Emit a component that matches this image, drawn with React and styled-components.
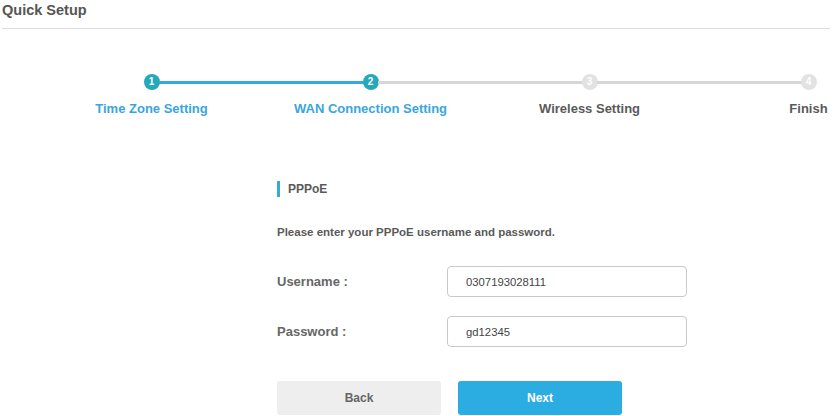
import styled, { createGlobalStyle } from 'styled-components';

const GlobalStyle = createGlobalStyle`
  html, body {
    margin: 0;
    padding: 0;
    background: #ffffff;
    overflow: hidden;
  }
  body {
    font-family: 'Liberation Sans', Arial, sans-serif;
  }
`;

const steps = [
  { label: 'Time Zone Setting', done: true },
  { label: 'WAN Connection Setting', done: true },
  { label: 'Wireless Setting', done: false },
  { label: 'Finish', done: false },
];

export default function App() {
  return (
    <Page>
      <GlobalStyle />
      <Header>
        <h1>Quick Setup</h1>
      </Header>

      <Stepper>
        {steps.map((step, i) => (
          <Step key={step.label} $last={i === steps.length - 1} $lineOn={step.done && steps[i + 1] && steps[i + 1].done}>
            <Dot $on={step.done}>{i + 1}</Dot>
            <StepLabel $on={step.done}>{step.label}</StepLabel>
          </Step>
        ))}
      </Stepper>

      <Form>
        <SectionTitle>PPPoE</SectionTitle>
        <Hint>Please enter your PPPoE username and password.</Hint>

        <Row>
          <FieldLabel>Username :</FieldLabel>
          <Input type="text" defaultValue="0307193028111" />
        </Row>
        <Row>
          <FieldLabel>Password :</FieldLabel>
          <Input type="text" defaultValue="gd12345" />
        </Row>

        <Buttons>
          <Button>Back</Button>
          <Button $primary>Next</Button>
        </Buttons>
      </Form>
    </Page>
  );
}

const Page = styled.div`
  width: 835px;
  height: 416px;
  overflow: hidden;
  color: #555555;
`;

const Header = styled.div`
  margin: 0 5px 0 2px;
  height: 28px;
  border-bottom: 1px solid #dcdcdc;

  h1 {
    margin: 0;
    padding-top: 2px;
    font-size: 14.5px;
    line-height: 17px;
    font-weight: 700;
    color: #555555;
  }
`;

const Stepper = styled.div`
  display: grid;
  grid-template-columns: repeat(4, 219px);
  margin: 44px 0 0 42px;
`;

const Step = styled.div`
  position: relative;
  display: flex;
  flex-direction: column;
  align-items: center;

  &::after {
    content: '';
    display: ${(p) => (p.$last ? 'none' : 'block')};
    position: absolute;
    top: 8px;
    left: calc(50% + 7px);
    width: 205px;
    height: 3px;
    background: ${(p) => (p.$lineOn ? '#37a7df' : '#d6d6d6')};
  }
`;

const Dot = styled.div`
  width: 16px;
  height: 16px;
  margin-top: 1px;
  border-radius: 50%;
  background: ${(p) => (p.$on ? '#25a9b9' : '#e2e2e2')};
  color: #ffffff;
  font-size: 10px;
  font-weight: 700;
  line-height: 16px;
  text-align: center;
`;

const StepLabel = styled.div`
  margin-top: 11px;
  white-space: nowrap;
  font-size: 13px;
  line-height: 15px;
  font-weight: 700;
  color: ${(p) => (p.$on ? '#3aa6dc' : '#5a5a5a')};
`;

const Form = styled.div`
  width: 410px;
  margin: 65px 0 0 277px;
  display: flex;
  flex-direction: column;
`;

const SectionTitle = styled.div`
  border-left: 3px solid #37a9de;
  padding-left: 8px;
  height: 16px;
  font-size: 12px;
  line-height: 16px;
  font-weight: 700;
  color: #5a5a5a;
`;

const Hint = styled.div`
  margin-top: 29px;
  font-size: 11.5px;
  line-height: 13px;
  font-weight: 700;
  color: #5a5a5a;
`;

const Row = styled.div`
  display: flex;
  align-items: center;
  margin-top: 27px;
  & + & {
    margin-top: 19px;
  }
`;

const FieldLabel = styled.div`
  width: 170px;
  font-size: 13px;
  font-weight: 700;
  color: #666666;
`;

const Input = styled.input`
  box-sizing: border-box;
  width: 240px;
  height: 31px;
  padding: 0 18px;
  border: 1px solid #c9c9c9;
  border-radius: 4px;
  font-family: 'Liberation Sans', Arial, sans-serif;
  font-size: 11.3px;
  color: #444444;
  outline: none;
`;

const Buttons = styled.div`
  display: flex;
  gap: 17px;
  margin-top: 34px;
`;

const Button = styled.button`
  width: 164px;
  height: 34px;
  border: none;
  border-radius: 3px;
  background: ${(p) => (p.$primary ? '#2bade2' : '#eeeeee')};
  color: ${(p) => (p.$primary ? '#ffffff' : '#666666')};
  font-family: 'Liberation Sans', Arial, sans-serif;
  font-size: 12px;
  font-weight: 700;
`;
